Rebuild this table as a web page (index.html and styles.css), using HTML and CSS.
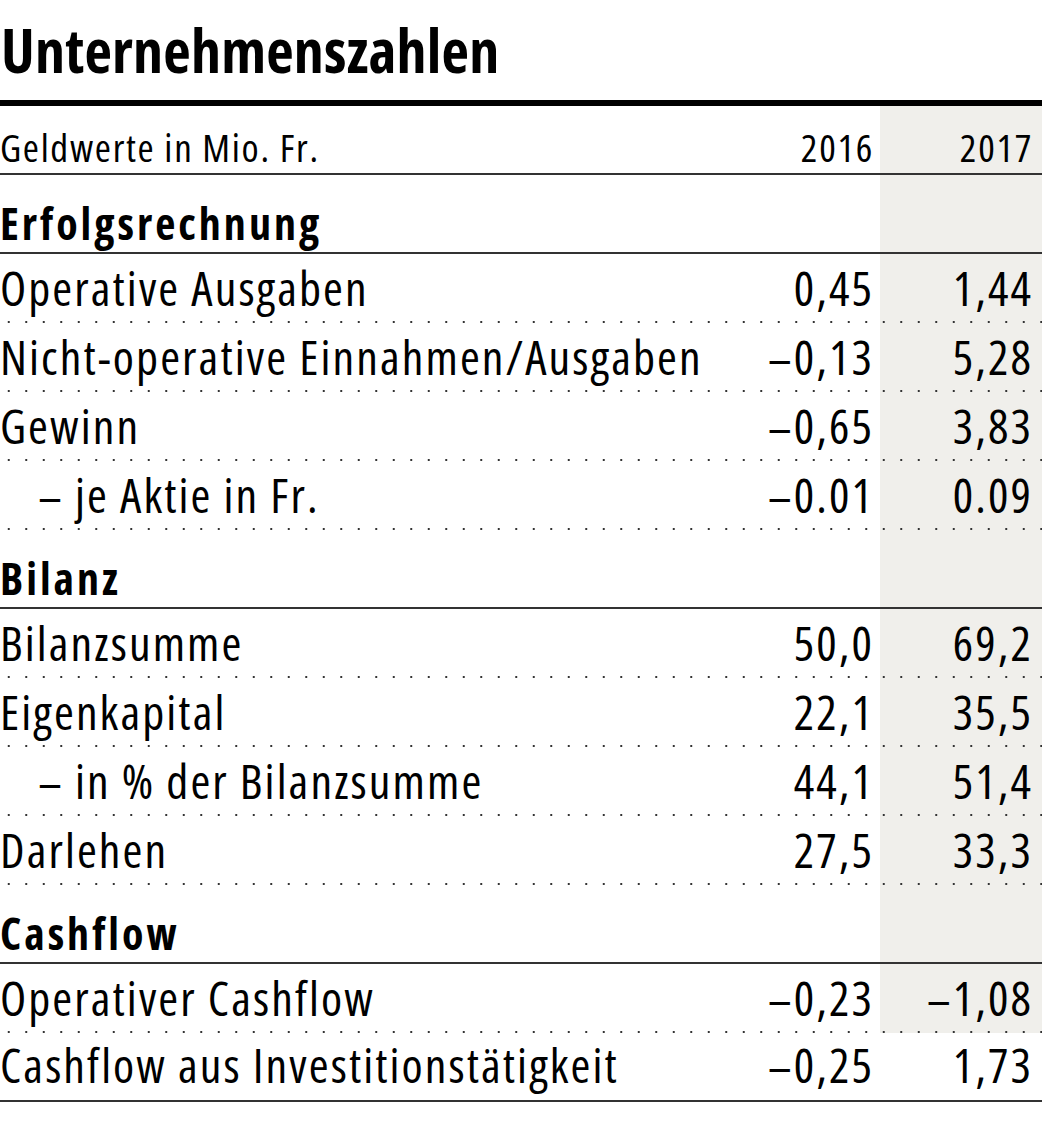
FILE: index.html
```html
<!DOCTYPE html>
<html lang="de">
<head>
<meta charset="utf-8">
<title>Unternehmenszahlen</title>
<link rel="stylesheet" href="styles.css">
</head>
<body>
<div class="card">
  <h1 class="title">Unternehmenszahlen</h1>
  <div class="row head">
    <div class="label">Geldwerte in Mio. Fr.</div>
    <div class="num">2016</div>
    <div class="num">2017</div>
  </div>
  <div class="row section"><div class="label">Erfolgsrechnung</div></div>
  <div class="row data"><div class="label">Operative Ausgaben</div><div class="num">0,45</div><div class="num">1,44</div></div>
  <div class="row data"><div class="label">Nicht-operative Einnahmen/Ausgaben</div><div class="num">–0,13</div><div class="num">5,28</div></div>
  <div class="row data"><div class="label">Gewinn</div><div class="num">–0,65</div><div class="num">3,83</div></div>
  <div class="row data"><div class="label sub">– je Aktie in Fr.</div><div class="num">–0.01</div><div class="num">0.09</div></div>
  <div class="row section"><div class="label">Bilanz</div></div>
  <div class="row data"><div class="label">Bilanzsumme</div><div class="num">50,0</div><div class="num">69,2</div></div>
  <div class="row data"><div class="label">Eigenkapital</div><div class="num">22,1</div><div class="num">35,5</div></div>
  <div class="row data"><div class="label sub">– in % der Bilanzsumme</div><div class="num">44,1</div><div class="num">51,4</div></div>
  <div class="row data"><div class="label">Darlehen</div><div class="num">27,5</div><div class="num">33,3</div></div>
  <div class="row section"><div class="label">Cashflow</div></div>
  <div class="row data"><div class="label">Operativer Cashflow</div><div class="num">–0,23</div><div class="num">–1,08</div></div>
  <div class="row data last"><div class="label">Cashflow aus Investitionstätigkeit</div><div class="num">–0,25</div><div class="num">1,73</div></div>
</div>
</body>
</html>
```
FILE: styles.css
```css
html, body {
  margin: 0;
  padding: 0;
  background: #fff;
}
.card {
  width: 1042px;
  font-family: "Open Sans", "Noto Sans", sans-serif;
  font-stretch: 75%;
  color: #000;
}
.title {
  margin: 0;
  box-sizing: border-box;
  height: 106px;
  padding: 20px 0 0 1px;
  border-bottom: 6px solid #000;
  font-size: 60px;
  line-height: 60px;
  font-weight: 700;
  letter-spacing: 0.2px;
}
.row {
  display: grid;
  grid-template-columns: 1fr 160px 162px;
  align-items: end;
  box-sizing: border-box;
  background-image: linear-gradient(to right, transparent 880px, #f0efeb 880px);
}
.num {
  text-align: right;
  padding-right: 6px;
}
.num:last-child {
  padding-right: 9px;
}
.head {
  height: 69px;
  border-bottom: 2px solid #333;
  padding-bottom: 7px;
  font-size: 39px;
  line-height: 39px;
  font-weight: 400;
  letter-spacing: 1.7px;
}
.section {
  height: 79px;
  border-bottom: 2px solid #333;
  padding-bottom: 7px;
  font-size: 44px;
  line-height: 44px;
  font-weight: 700;
  letter-spacing: 3px;
}
.data {
  height: 69px;
  padding-bottom: 11px;
  font-size: 48px;
  line-height: 48px;
  font-weight: 400;
  letter-spacing: 2.1px;
  background-image:
    radial-gradient(circle, #333 0.9px, transparent 1.4px),
    linear-gradient(to right, transparent 880px, #f0efeb 880px);
  background-size: 17.5px 2px, 100% 100%;
  background-position: 0 100%, 0 0;
  background-repeat: repeat-x, no-repeat;
}
.data.last {
  border-bottom: 2px solid #333;
  background-image: linear-gradient(to right, transparent 880px, #f0efeb 880px);
}
.label {
  white-space: nowrap;
}
.sub {
  padding-left: 38px;
}
```
